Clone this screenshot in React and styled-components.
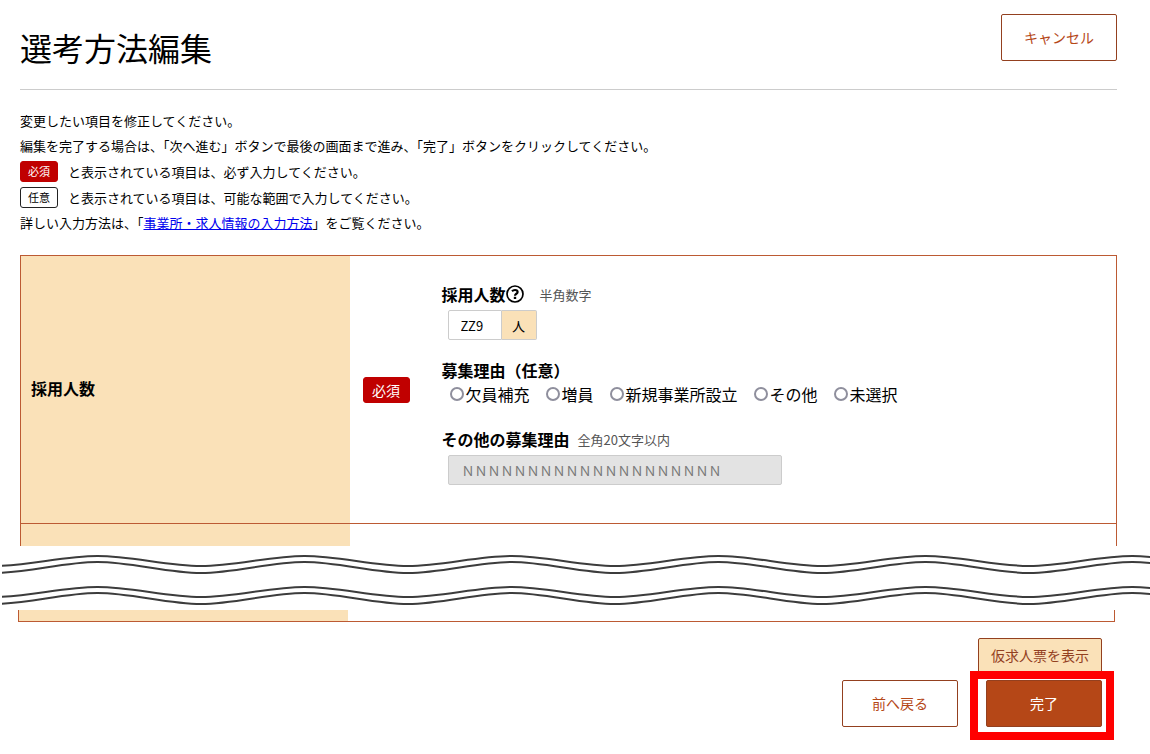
import React, { useState } from 'react';
import styled, { ThemeProvider, createGlobalStyle, css } from 'styled-components';

const theme = {
  colors: {
    text: '#000000',
    hint: '#555555',
    rule: '#cccccc',
    required: '#c00000',
    primary: '#b54717',
    primaryDark: '#93401f',
    frame: '#bc5a33',
    cream: '#fae1b8',
    link: '#0000ee',
    radio: '#8f8f9d',
    highlight: '#ff0000'
  },
  fontSizes: { xs: '11px', sm: '13px', md: '14px', lg: '16px', xl: '32px' }
};

const REASONS = ['欠員補充', '増員', '新規事業所設立', 'その他', '未選択'];

const PERIOD = 207;
const WAVE_LINES = [
  { crest: 10, trough: 20 },
  { crest: 16, trough: 27 },
  { crest: 41, trough: 51 },
  { crest: 47, trough: 58 }
];

// Starts at a trough just left of the drawing and swings up and down from there
const getWavePath = ({ crest, trough }) => {
  let x = -8;
  let path = `M${x} ${trough}`;
  for (let i = 0; i < 6; i += 1) {
    const top = x + PERIOD / 2;
    const end = x + PERIOD;
    path += ` C${x + 34} ${trough} ${top - 34} ${crest} ${top} ${crest}`;
    path += ` C${top + 34} ${crest} ${end - 34} ${trough} ${end} ${trough}`;
    x = end;
  }
  return path;
};

const WaveBreak = () => (
  <WaveSvg viewBox="0 0 1148 64" preserveAspectRatio="none" aria-hidden="true">
    {WAVE_LINES.map(line => (
      <path key={line.crest} d={getWavePath(line)} fill="none" stroke="#3c3c3c" strokeWidth="2" />
    ))}
  </WaveSvg>
);

const HelpIcon = () => (
  <svg width="18" height="18" viewBox="0 0 18 18" aria-hidden="true">
    <circle cx="9" cy="9" r="8" fill="none" stroke="#000" strokeWidth="1.7" />
    <path
      d="M6 6.2C6.8 5.4 7.8 5 9 5c1.600 0 2.600.7 2.600 1.900 0 1.900-2.600 1.800-2.600 3.900"
      fill="none"
      stroke="#000"
      strokeWidth="2.2"
    />
    <rect x="7.800" y="11.800" width="2.400" height="2.200" fill="#000" />
  </svg>
);

const App = () => {
  const [count, setCount] = useState('ZZ9');
  const [reason, setReason] = useState('');

  return (
    <ThemeProvider theme={theme}>
      <GlobalStyle />
      <Page>
        <Header>
          <Title>選考方法編集</Title>
          <Button type="button">キャンセル</Button>
        </Header>

        <Guide>
          <p>変更したい項目を修正してください。</p>
          <p>編集を完了する場合は、「次へ進む」ボタンで最後の画面まで進み、「完了」ボタンをクリックしてください。</p>
          <GuideRow>
            <Badge $required>必須</Badge>
            と表示されている項目は、必ず入力してください。
          </GuideRow>
          <GuideRow>
            <Badge>任意</Badge>
            と表示されている項目は、可能な範囲で入力してください。
          </GuideRow>
          <p>
            詳しい入力方法は、「<GuideLink href="#guide">事業所・求人情報の入力方法</GuideLink>」をご覧ください。
          </p>
        </Guide>

        <form onSubmit={e => e.preventDefault()}>
          <FormTable>
            <FormRow>
              <RowHeading>採用人数</RowHeading>
              <RowBadge>
                <Badge $required $large>必須</Badge>
              </RowBadge>
              <Fields>
                <div>
                  <FieldHead>
                    <FieldLabel htmlFor="count">採用人数</FieldLabel>
                    <HelpButton type="button" aria-label="ヘルプ">
                      <HelpIcon />
                    </HelpButton>
                    <Hint $wide>半角数字</Hint>
                  </FieldHead>
                  <InputGroup>
                    <CountInput id="count" value={count} onChange={e => setCount(e.target.value)} />
                    <Unit>人</Unit>
                  </InputGroup>
                </div>

                <Fieldset>
                  <Legend>募集理由（任意）</Legend>
                  <RadioList>
                    {REASONS.map(item => (
                      <RadioLabel key={item}>
                        <Radio
                          type="radio"
                          name="reason"
                          value={item}
                          checked={reason === item}
                          onChange={() => setReason(item)}
                        />
                        {item}
                      </RadioLabel>
                    ))}
                  </RadioList>
                </Fieldset>

                <div>
                  <FieldHead>
                    <FieldLabel htmlFor="other">その他の募集理由</FieldLabel>
                    <Hint>全角20文字以内</Hint>
                  </FieldHead>
                  <InputGroup>
                    <OtherInput id="other" value={'Ｎ'.repeat(20)} disabled readOnly />
                  </InputGroup>
                </div>
              </Fields>
            </FormRow>
            <CutRow />
          </FormTable>

          <WaveBreak />

          <TableEnd>
            <CutRow $short />
          </TableEnd>

          <Actions>
            <PreviewButton type="button">仮求人票を表示</PreviewButton>
            <ActionRow>
              <Button type="button">前へ戻る</Button>
              <Highlight>
                <Button type="submit" $primary>完了</Button>
              </Highlight>
            </ActionRow>
          </Actions>
        </form>
      </Page>
    </ThemeProvider>
  );
};

const GlobalStyle = createGlobalStyle`
  *, *::before, *::after {
    box-sizing: border-box;
  }

  body {
    margin: 0;
    background-color: #ffffff;
    color: #000000;
  }

  body, button, input {
    font-family: 'Noto Sans CJK JP', 'Noto Sans', sans-serif;
  }

  p {
    margin: 0;
  }
`;

const Page = styled.main`
  padding: 14px 33px 0 20px;
`;

const Header = styled.header`
  display: flex;
  justify-content: space-between;
  align-items: flex-start;
  padding-bottom: 16px;
  border-bottom: 1px solid ${props => props.theme.colors.rule};
`;

const Title = styled.h1`
  margin: 8px 0 0;
  font-size: ${props => props.theme.fontSizes.xl};
  font-weight: 400;
  line-height: 51px;
`;

const Button = styled.button`
  min-width: 116px;
  height: 47px;
  padding: 0 20px 2px;
  border: 1px solid ${props => props.theme.colors.primaryDark};
  border-radius: 2px;
  background-color: ${props => props.$primary ? props.theme.colors.primary : '#ffffff'};
  color: ${props => props.$primary ? '#ffffff' : props.theme.colors.primary};
  font-size: ${props => props.theme.fontSizes.md};
  cursor: pointer;
`;

const Guide = styled.section`
  padding: 18px 0 20px;
  font-size: ${props => props.theme.fontSizes.sm};
  line-height: 25px;
`;

const GuideRow = styled.p`
  display: flex;
  align-items: center;
  gap: 10px;
  height: 26px;
`;

const GuideLink = styled.a`
  color: ${props => props.theme.colors.link};
`;

const Badge = styled.span`
  display: inline-flex;
  align-items: center;
  justify-content: center;
  width: 38px;
  height: 21px;
  border: 1px solid ${props => props.$required ? props.theme.colors.required : '#222222'};
  border-radius: 3px;
  background-color: ${props => props.$required ? props.theme.colors.required : '#ffffff'};
  color: ${props => props.$required ? '#ffffff' : props.theme.colors.text};
  font-size: ${props => props.theme.fontSizes.xs};

  ${props => props.$large && css`
    width: 47px;
    height: 26px;
    font-size: ${props.theme.fontSizes.md};
  `}
`;

const FormTable = styled.div`
  border: 1px solid ${props => props.theme.colors.frame};
  border-bottom: 0;
`;

const FormRow = styled.div`
  display: grid;
  grid-template-columns: 30% 92px 1fr;
  border-bottom: 1px solid ${props => props.theme.colors.frame};
`;

const RowHeading = styled.h2`
  display: flex;
  align-items: center;
  margin: 0;
  padding: 0 10px 4px;
  background-color: ${props => props.theme.colors.cream};
  font-size: ${props => props.theme.fontSizes.lg};
  font-weight: 700;
`;

const RowBadge = styled.div`
  display: flex;
  align-items: center;
  padding-left: 13px;
`;

const Fields = styled.div`
  display: flex;
  flex-direction: column;
  gap: 18px;
  padding: 26px 0 38px;
`;

const FieldHead = styled.div`
  display: flex;
  align-items: center;
  height: 24px;
`;

const fieldTitle = css`
  font-size: ${props => props.theme.fontSizes.lg};
  font-weight: 700;
  line-height: 24px;
`;

const FieldLabel = styled.label`
  ${fieldTitle}
`;

const HelpButton = styled.button`
  display: flex;
  padding: 0;
  border: 0;
  background: none;
  cursor: pointer;
`;

const Hint = styled.span`
  margin-left: ${props => props.$wide ? '16px' : '8px'};
  color: ${props => props.theme.colors.hint};
  font-size: ${props => props.theme.fontSizes.sm};
`;

const InputGroup = styled.div`
  display: flex;
  margin: 4px 0 0 6px;
`;

const CountInput = styled.input`
  width: 54px;
  height: 30px;
  padding: 0 12px;
  border: 1px solid ${props => props.theme.colors.rule};
  border-radius: 2px 0 0 2px;
  font-size: ${props => props.theme.fontSizes.sm};
`;

const Unit = styled.span`
  display: flex;
  align-items: center;
  justify-content: center;
  width: 35px;
  border: 1px solid ${props => props.theme.colors.rule};
  border-left: 0;
  border-radius: 0 2px 2px 0;
  background-color: ${props => props.theme.colors.cream};
  font-size: ${props => props.theme.fontSizes.sm};
`;

const Fieldset = styled.fieldset`
  margin: 0;
  padding: 0;
  border: 0;
`;

const Legend = styled.legend`
  padding: 0;
  ${fieldTitle}
`;

const RadioList = styled.div`
  display: flex;
  flex-wrap: wrap;
  gap: 16px;
  padding: 0 0 3px 8px;
`;

const RadioLabel = styled.label`
  display: flex;
  align-items: center;
  gap: 2px;
  font-size: ${props => props.theme.fontSizes.lg};
  line-height: 24px;
`;

const Radio = styled.input`
  appearance: none;
  width: 14px;
  height: 14px;
  margin: 0;
  border: 2px solid ${props => props.theme.colors.radio};
  border-radius: 50%;
  background-color: #ffffff;

  &:checked {
    border-width: 4px;
    border-color: ${props => props.theme.colors.primary};
  }
`;

const OtherInput = styled.input`
  width: 334px;
  height: 30px;
  padding: 0 13px;
  border: 1px solid ${props => props.theme.colors.rule};
  border-radius: 2px;
  background-color: #e3e3e3;
  color: #777777;
  font-size: ${props => props.theme.fontSizes.sm};
`;

const CutRow = styled.div`
  width: 30%;
  height: ${props => props.$short ? '11px' : '22px'};
  background-color: ${props => props.theme.colors.cream};
`;

const WaveSvg = styled.svg`
  display: block;
  width: calc(100% + 51px);
  height: 64px;
  margin-left: -18px;
`;

const TableEnd = styled.div`
  margin: 0 2px 0 -2px;
  border: 1px solid ${props => props.theme.colors.frame};
  border-top: 0;
`;

const Actions = styled.div`
  display: flex;
  flex-direction: column;
  align-items: flex-end;
  gap: 4px;
  padding: 16px 15px 26px 0;
`;

const PreviewButton = styled.button`
  height: 38px;
  padding: 0 12px 4px;
  border: 1px solid ${props => props.theme.colors.primaryDark};
  border-radius: 2px;
  background-color: ${props => props.theme.colors.cream};
  color: ${props => props.theme.colors.primaryDark};
  font-size: ${props => props.theme.fontSizes.md};
  cursor: pointer;
`;

const ActionRow = styled.div`
  display: flex;
  gap: 28px;
`;

const Highlight = styled.div`
  position: relative;

  &::before {
    content: '';
    position: absolute;
    inset: -9px -12px -13px -16px;
    border: 8px solid ${props => props.theme.colors.highlight};
    background-color: #ffffff;
  }

  ${Button} {
    position: relative;
  }
`;

export default App;
